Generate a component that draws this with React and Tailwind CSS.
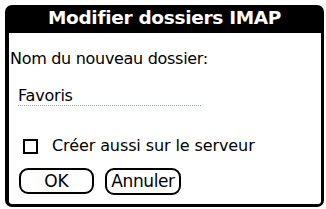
export default function App() {
  return (
    <div className="w-[326px] h-[209px] bg-white pt-[5px] pl-[5px]" style={{ fontFamily: '"DejaVu Sans", sans-serif' }}>
      <div className="w-[319px] h-[202px] bg-black rounded-[7px] flex flex-col overflow-hidden">
        <div className="h-[28px] shrink-0 flex items-center justify-center text-white font-bold text-[18.5px] leading-none pb-[1px] tracking-[-0.3px]">
          Modifier dossiers IMAP
        </div>
        <div className="flex-1 bg-white ml-[4px] mr-[3px] mb-[3px] rounded-b-[3px] flex flex-col text-black">
          <div className="mt-[18px] ml-[1px] text-[16px] leading-none tracking-[-0.3px]">Nom du nouveau dossier:</div>
          <div className="mt-[21px] ml-[9px] w-[183px] border-b border-dotted border-gray-400 pb-[1px] text-[16px] leading-none tracking-[-0.2px]">
            Favoris
          </div>
          <div className="mt-[32px] ml-[14px] flex items-center gap-[14px]">
            <div className="w-[15px] h-[15px] border-2 border-black" />
            <span className="text-[16px] leading-none tracking-[-0.1px]">Créer aussi sur le serveur</span>
          </div>
          <div className="mt-[14px] ml-[10px] flex gap-[11px]">
            <button className="w-[75px] h-[26px] border-2 border-black rounded-[9px] text-[17px] leading-none flex items-center justify-center">
              OK
            </button>
            <button className="w-[76px] h-[27px] border-2 border-black rounded-[9px] text-[17px] leading-none flex items-center justify-center tracking-[-0.4px]">
              Annuler
            </button>
          </div>
        </div>
      </div>
    </div>
  );
}
